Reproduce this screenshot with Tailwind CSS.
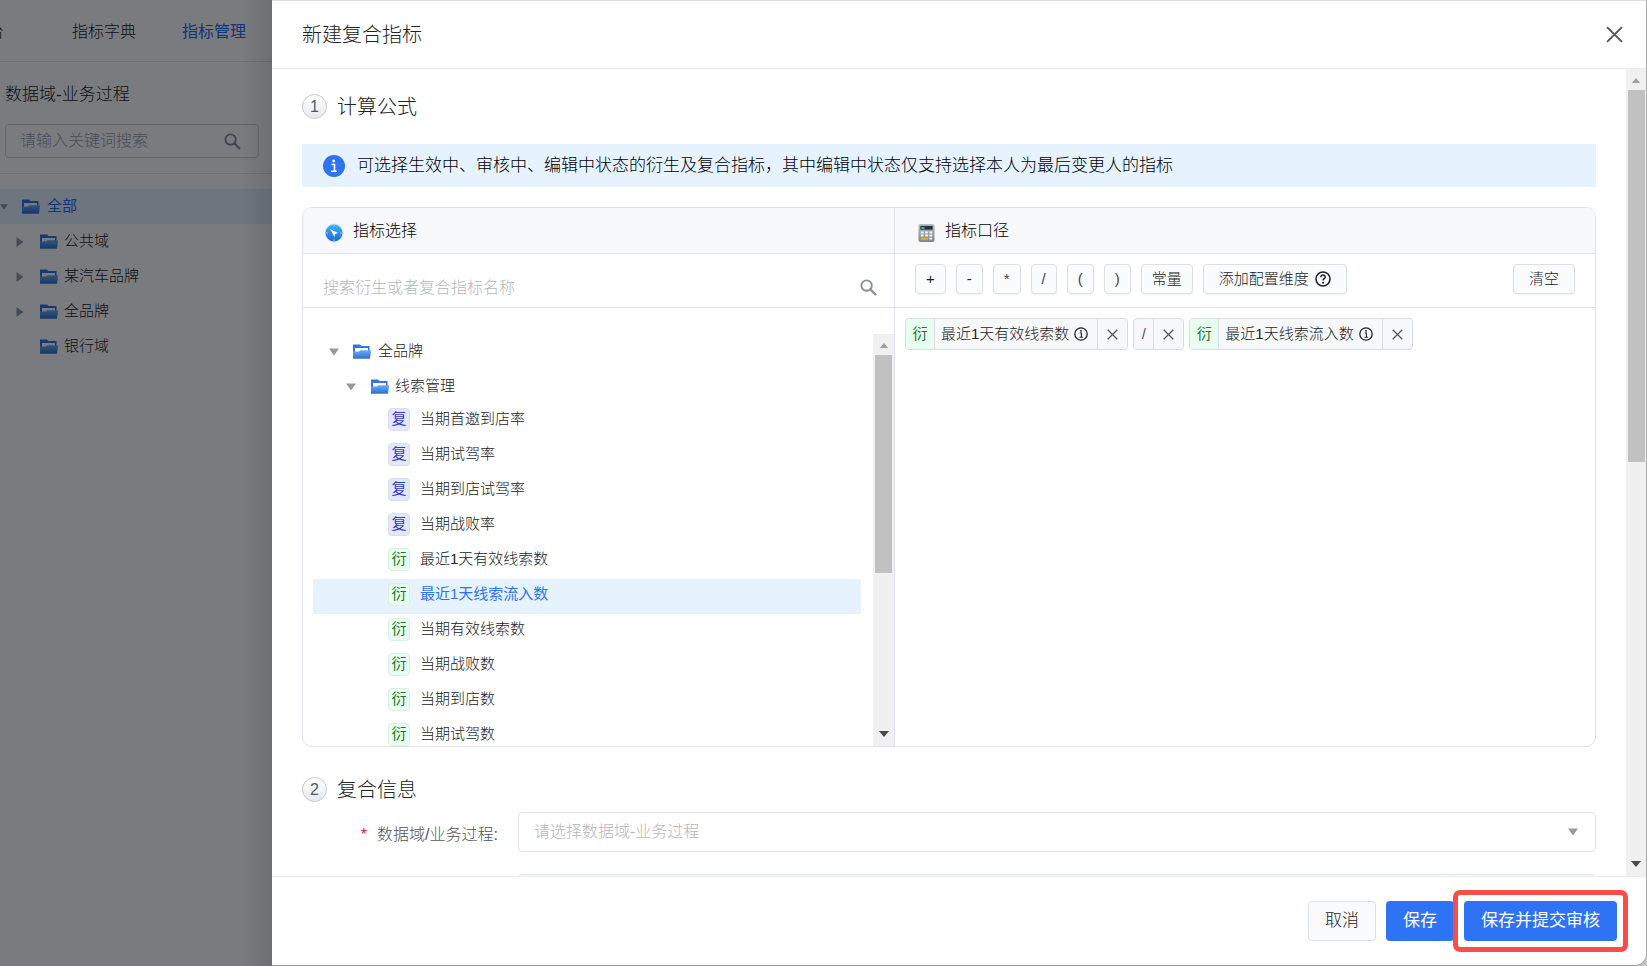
<!DOCTYPE html>
<html lang="zh-CN">
<head>
<meta charset="utf-8">
<title>新建复合指标</title>
<script src="https://cdn.jsdelivr.net/npm/@tailwindcss/browser@4"></script>
</head>
<body class="h-screen overflow-hidden bg-[#c4c6ca] font-['Liberation_Sans','Noto_Sans_CJK_SC',sans-serif] font-light text-[#222]">
<svg class="absolute size-0">
  <defs>
    <linearGradient id="folderFill" x1="0" y1="0" x2="0" y2="1"><stop offset="0" stop-color="#6aabf5"/><stop offset="1" stop-color="#2f72cf"/></linearGradient>
    <linearGradient id="compassFill" x1="0" y1="0" x2="0" y2="1"><stop offset="0" stop-color="#3db4f5"/><stop offset="1" stop-color="#2266d8"/></linearGradient>
    <linearGradient id="calcFill" x1="0" y1="0" x2="0" y2="1"><stop offset="0" stop-color="#b9c0c4"/><stop offset="1" stop-color="#7e868b"/></linearGradient>
  </defs>
  <symbol id="folder" viewBox="0 0 18 15"><path d="M0 .5h7l1.500 1.500H16.500V7H17.500L17 14.500H0z" fill="#3672e6"/><path d="M2 4h13v4H2z" fill="#fff"/><path d="M0 14.500V7.500h6l1.200-1.200H17.800L17 14.500z" fill="url(#folderFill)"/></symbol>
  <symbol id="down" viewBox="0 0 10 8"><path d="M0 .5h10L5 7.500z" fill="#929ba3"/></symbol>
  <symbol id="right" viewBox="0 0 8 10"><path d="M.5 0v10L7.500 5z" fill="#929ba3"/></symbol>
  <symbol id="search" viewBox="0 0 18 18"><circle cx="7" cy="7" r="5.500" fill="none" stroke="#87919a" stroke-width="2"/><path d="M11 11l6 6" stroke="#87919a" stroke-width="2.400"/></symbol>
  <symbol id="close" viewBox="0 0 16 16"><path d="M1 1l14 14M15 1L1 15" fill="none" stroke="currentColor" stroke-width="1.800"/></symbol>
  <symbol id="info" viewBox="0 0 14 14"><circle cx="7" cy="7" r="6.200" fill="none" stroke="#222" stroke-width="1.300"/><path d="M5.700 6h1.700v4M5.500 10.200h3.400" fill="none" stroke="#222" stroke-width="1.100"/><circle cx="7" cy="3.900" r=".9" fill="#222"/></symbol>
  <symbol id="sup" viewBox="0 0 10 6"><path d="M0 6h10L5 0z" fill="#a0a0a0"/></symbol>
  <symbol id="sdown" viewBox="0 0 10 6"><path d="M0 0h10L5 6z" fill="#4a4a4a"/></symbol>
</svg>
<div class="flex h-full">
  <aside class="relative flex w-[272px] shrink-0 flex-col bg-white">
    <nav class="flex h-[62px] shrink-0 items-center justify-end gap-[46px] overflow-hidden border-b border-gray-200 pt-[2px] pr-[26px] text-[16px] whitespace-nowrap">
      <a href="#" class="mr-[22px]">平台</a>
      <a href="#">指标字典</a>
      <a href="#" class="font-normal text-[#2468f2]">指标管理</a>
    </nav>
    <div class="border-b border-gray-200 px-[5px] pt-5 pb-[15px]">
      <h2 class="text-[17px] leading-[26px]">数据域-业务过程</h2>
      <label class="mt-4 mr-2 flex h-[34px] items-center rounded border border-gray-300 pr-[17px] pl-[14px]">
        <input type="text" aria-label="关键词搜索" placeholder="请输入关键词搜索" class="w-0 flex-1 text-[16px] outline-none placeholder:text-gray-400">
        <svg class="size-[17px]"><use href="#search"/></svg>
      </label>
    </div>
    <ul class="pt-[15px] text-[15px]">
      <li class="flex h-[35px] items-center bg-[#e6f3ff] font-normal text-[#2468f2]"><svg class="mr-[14px] h-2 w-2"><use href="#down"/></svg><svg class="mr-[7px] h-[15px] w-[18px]"><use href="#folder"/></svg>全部</li>
      <li class="flex h-[35px] items-center pl-4"><svg class="mr-4 h-[10px] w-2"><use href="#right"/></svg><svg class="mr-[6px] h-[15px] w-[18px]"><use href="#folder"/></svg>公共域</li>
      <li class="flex h-[35px] items-center pl-4"><svg class="mr-4 h-[10px] w-2"><use href="#right"/></svg><svg class="mr-[6px] h-[15px] w-[18px]"><use href="#folder"/></svg>某汽车品牌</li>
      <li class="flex h-[35px] items-center pl-4"><svg class="mr-4 h-[10px] w-2"><use href="#right"/></svg><svg class="mr-[6px] h-[15px] w-[18px]"><use href="#folder"/></svg>全品牌</li>
      <li class="flex h-[35px] items-center pl-10"><svg class="mr-[6px] h-[15px] w-[18px]"><use href="#folder"/></svg>银行域</li>
    </ul>
    <div class="absolute inset-0 bg-[#01060d]/53"></div>
    <div class="absolute inset-y-0 right-0 w-8 bg-linear-to-l from-black/10 to-transparent"></div>
  </aside>

  <main class="flex min-w-0 flex-1 flex-col rounded-br-xl border-t border-r border-b border-t-[#ddd] border-r-[#aaa] border-b-[#999] bg-white">
    <header class="flex h-[68px] shrink-0 items-center justify-between border-b border-[#ececec] pr-[23px] pl-[30px]">
      <h1 class="text-[20px]">新建复合指标</h1>
      <button type="button" aria-label="关闭" class="text-[#555]"><svg class="size-[17px]"><use href="#close"/></svg></button>
    </header>

    <div class="flex min-h-0 flex-1">
      <div class="min-w-0 flex-1 overflow-hidden pr-[30px] pl-[30px]">
        <h2 class="mt-6 flex h-[27px] items-center gap-[10px] text-[20px]"><span class="flex size-[25px] items-center justify-center rounded-full border border-[#c9ccd0] bg-linear-to-b from-white to-[#e6e9ed] text-[16px] font-medium text-[#4a5f6e]">1</span>计算公式</h2>
        <p class="mt-6 flex h-[43px] items-center bg-[#e6f3ff] pl-[21px] text-[17px] text-black">
          <svg class="mr-3 size-[22px] shrink-0" viewBox="0 0 22 22"><circle cx="11" cy="11" r="11" fill="#2e73f3"/><circle cx="10.700" cy="6" r="1.400" fill="#fff"/><path d="M8.500 9.500h3v6.500M8 16.300h6" fill="none" stroke="#fff" stroke-width="1.600"/></svg>
          可选择生效中、审核中、编辑中状态的衍生及复合指标，其中编辑中状态仅支持选择本人为最后变更人的指标
        </p>

        <div class="mt-5 flex h-[540px] overflow-hidden rounded-[10px] border border-[#dfe2e6]">
          <section class="flex w-[592px] shrink-0 flex-col border-r border-[#dfe2e6]">
            <h3 class="flex h-[46px] shrink-0 items-center border-b border-[#dfe2e6] bg-[#f7f8fa] pl-[21px] text-[16px] text-black">
              <svg class="mt-1 mr-[9px] size-5" viewBox="0 0 20 20"><circle cx="10" cy="10" r="9.500" fill="#dfe4ea"/><circle cx="10" cy="10" r="8.500" fill="url(#compassFill)"/><path d="M6 6l8 4-3 1-.5 3z" fill="#fff"/><path d="M10 2v2M10 16v2M2 10h2M16 10h2" stroke="#8fd0fa"/></svg>
              指标选择
            </h3>
            <label class="flex h-[54px] shrink-0 items-center border-b border-[#dfe2e6] pt-[14px] pr-[17px] pl-5">
              <input type="text" aria-label="搜索指标" placeholder="搜索衍生或者复合指标名称" class="min-w-0 flex-1 text-[16px] outline-none placeholder:text-[#b4b7bb]">
              <svg class="size-[17px]"><use href="#search"/></svg>
            </label>
            <div class="flex min-h-0 flex-1 pt-[26px] pl-[10px]">
              <ul class="min-w-0 flex-1 overflow-hidden pr-3 text-[15px]">
                <li class="flex h-[35px] items-center pl-4"><svg class="mr-[14px] h-2 w-[10px]"><use href="#down"/></svg><svg class="mr-[7px] h-[15px] w-[18px]"><use href="#folder"/></svg>全品牌</li>
                <li class="flex h-[35px] items-center pl-[33px]"><svg class="mr-[15px] h-2 w-[10px]"><use href="#down"/></svg><svg class="mr-[6px] h-[15px] w-[18px]"><use href="#folder"/></svg>线索管理</li>
                <li class="flex h-[35px] items-center gap-[10px] pb-1 pl-[75px]"><span class="flex h-[23px] w-[22px] items-center justify-center rounded border border-[#d9dcf3] bg-[#e4e7fb] font-normal text-[#2b3cc4]">复</span>当期首邀到店率</li>
                <li class="flex h-[35px] items-center gap-[10px] pb-1 pl-[75px]"><span class="flex h-[23px] w-[22px] items-center justify-center rounded border border-[#d9dcf3] bg-[#e4e7fb] font-normal text-[#2b3cc4]">复</span>当期试驾率</li>
                <li class="flex h-[35px] items-center gap-[10px] pb-1 pl-[75px]"><span class="flex h-[23px] w-[22px] items-center justify-center rounded border border-[#d9dcf3] bg-[#e4e7fb] font-normal text-[#2b3cc4]">复</span>当期到店试驾率</li>
                <li class="flex h-[35px] items-center gap-[10px] pb-1 pl-[75px]"><span class="flex h-[23px] w-[22px] items-center justify-center rounded border border-[#d9dcf3] bg-[#e4e7fb] font-normal text-[#2b3cc4]">复</span>当期战败率</li>
                <li class="flex h-[35px] items-center gap-[10px] pb-1 pl-[75px]"><span class="flex h-[23px] w-[22px] items-center justify-center rounded border border-[#d8f0e0] bg-[#e9fdf1] font-normal text-[#127a2e]">衍</span>最近1天有效线索数</li>
                <li class="flex h-[35px] items-center gap-[10px] bg-[#e6f3ff] pb-1 pl-[75px] font-normal text-[#2e73f3]"><span class="flex h-[23px] w-[22px] items-center justify-center rounded border border-[#d8f0e0] bg-[#e9fdf1] text-[#127a2e]">衍</span>最近1天线索流入数</li>
                <li class="flex h-[35px] items-center gap-[10px] pb-1 pl-[75px]"><span class="flex h-[23px] w-[22px] items-center justify-center rounded border border-[#d8f0e0] bg-[#e9fdf1] font-normal text-[#127a2e]">衍</span>当期有效线索数</li>
                <li class="flex h-[35px] items-center gap-[10px] pb-1 pl-[75px]"><span class="flex h-[23px] w-[22px] items-center justify-center rounded border border-[#d8f0e0] bg-[#e9fdf1] font-normal text-[#127a2e]">衍</span>当期战败数</li>
                <li class="flex h-[35px] items-center gap-[10px] pb-1 pl-[75px]"><span class="flex h-[23px] w-[22px] items-center justify-center rounded border border-[#d8f0e0] bg-[#e9fdf1] font-normal text-[#127a2e]">衍</span>当期到店数</li>
                <li class="flex h-[35px] items-center gap-[10px] pb-1 pl-[75px]"><span class="flex h-[23px] w-[22px] items-center justify-center rounded border border-[#d8f0e0] bg-[#e9fdf1] font-normal text-[#127a2e]">衍</span>当期试驾数</li>
              </ul>
              <div class="flex w-[21px] flex-col items-center justify-between bg-[#f0f0f0] pb-[9px]">
                <div class="flex flex-col items-center pt-[9px]"><svg class="mb-[7px] h-[5px] w-[10px]"><use href="#sup"/></svg><div class="h-[218px] w-[17px] bg-[#c1c1c1]"></div></div>
                <svg class="h-[6px] w-[10px]"><use href="#sdown"/></svg>
              </div>
            </div>
          </section>

          <section class="flex min-w-0 flex-1 flex-col">
            <h3 class="flex h-[46px] shrink-0 items-center border-b border-[#dfe2e6] bg-[#f7f8fa] pl-[23px] text-[16px] text-black">
              <svg class="mt-1 mr-[10px] h-5 w-[17px]" viewBox="0 0 18 20"><rect x=".5" y=".5" width="17" height="19" rx="2" fill="url(#calcFill)"/><rect x="2.500" y="2.500" width="13" height="4" fill="#2c3338"/><path d="M3.500 4h3.500v1.500H3.500z" fill="#2ee0c0"/><path d="M3 8.500h3v2H3zM7.500 8.500h3v2h-3zM12 8.500h3v2h-3zM3 11.700h3v2H3zM7.500 11.700h3v2h-3zM12 11.700h3v2h-3zM12 15h3v2h-3z" fill="#eef1f3"/><path d="M3 15h7.500v2.200H3z" fill="#f3a81c"/></svg>
              指标口径
            </h3>
            <div class="flex h-[54px] shrink-0 items-center gap-[10px] border-b border-[#dfe2e6] px-5 pb-[3px] text-[15px]">
              <button type="button" class="h-[30px] rounded-[4px] border border-[#dcdfe3] bg-[#fafbfd] px-[10px] shadow-xs">+</button>
              <button type="button" class="h-[30px] rounded-[4px] border border-[#dcdfe3] bg-[#fafbfd] px-[10px] shadow-xs">-</button>
              <button type="button" class="h-[30px] rounded-[4px] border border-[#dcdfe3] bg-[#fafbfd] px-[10px] text-[#444] shadow-xs">*</button>
              <button type="button" class="h-[30px] rounded-[4px] border border-[#dcdfe3] bg-[#fafbfd] px-[10px] text-[#444] shadow-xs">/</button>
              <button type="button" class="h-[30px] rounded-[4px] border border-[#dcdfe3] bg-[#fafbfd] px-[10px] text-[#444] shadow-xs">(</button>
              <button type="button" class="h-[30px] rounded-[4px] border border-[#dcdfe3] bg-[#fafbfd] px-[10px] text-[#444] shadow-xs">)</button>
              <button type="button" class="h-[30px] rounded-[4px] border border-[#dcdfe3] bg-[#fafbfd] px-[10px] shadow-xs">常量</button>
              <button type="button" class="flex h-[30px] items-center gap-[6px] rounded-[4px] border border-[#dcdfe3] bg-[#fafbfd] px-[15px] shadow-xs">添加配置维度
                <svg class="size-4" viewBox="0 0 16 16"><circle cx="8" cy="8" r="7" fill="none" stroke="#222" stroke-width="1.600"/><path d="M5.800 6.200c0-3 4.600-2.700 4.400 0C10.100 7.700 8 7.700 8 9.500" fill="none" stroke="#222" stroke-width="1.500"/><circle cx="8" cy="11.700" r="1" fill="#222"/></svg></button>
              <button type="button" class="ml-auto h-[30px] rounded-[4px] border border-[#dcdfe3] bg-[#fafbfd] px-[15px] shadow-xs">清空</button>
            </div>
            <div class="flex gap-[5px] p-[10px] text-[15px]">
              <div class="flex h-8 items-stretch overflow-hidden rounded-[4px] border border-[#d9dce0] bg-[#f7f8fa]">
                <span class="flex w-7 items-center justify-center bg-[#e9fdf1] font-normal text-[#127a2e]">衍</span>
                <span class="flex items-center gap-[5px] border-x border-[#d9dce0] pr-[9px] pl-[6px]">最近1天有效线索数<svg class="size-[14px]"><use href="#info"/></svg></span>
                <button type="button" aria-label="移除" class="flex w-[29px] items-center justify-center text-[#555]"><svg class="size-[11px]"><use href="#close"/></svg></button>
              </div>
              <div class="flex h-8 items-stretch overflow-hidden rounded-[4px] border border-[#d9dce0] bg-[#f7f8fa]">
                <span class="flex w-5 items-center justify-center border-r border-[#d9dce0] text-[#555]">/</span>
                <button type="button" aria-label="移除" class="flex w-[29px] items-center justify-center text-[#555]"><svg class="size-[11px]"><use href="#close"/></svg></button>
              </div>
              <div class="flex h-8 items-stretch overflow-hidden rounded-[4px] border border-[#d9dce0] bg-[#f7f8fa]">
                <span class="flex w-7 items-center justify-center bg-[#e9fdf1] font-normal text-[#127a2e]">衍</span>
                <span class="flex items-center gap-[5px] border-x border-[#d9dce0] pr-[9px] pl-[6px]">最近1天线索流入数<svg class="size-[14px]"><use href="#info"/></svg></span>
                <button type="button" aria-label="移除" class="flex w-[29px] items-center justify-center text-[#555]"><svg class="size-[11px]"><use href="#close"/></svg></button>
              </div>
            </div>
          </section>
        </div>

        <h2 class="mt-[29px] flex h-[27px] items-center gap-[10px] text-[20px]"><span class="flex size-[25px] items-center justify-center rounded-full border border-[#c9ccd0] bg-linear-to-b from-white to-[#e6e9ed] text-[16px] font-medium text-[#4a5f6e]">2</span>复合信息</h2>
        <div class="mt-[9px] flex items-center text-[16px]">
          <label for="domain" class="w-[216px] shrink-0 pt-[5px] pr-5 text-right text-[#555]"><span class="mr-[10px] text-[#e02020]">*</span>数据域/业务过程:</label>
          <div class="relative min-w-0 flex-1">
            <select id="domain" class="block h-10 w-full appearance-none rounded-[4px] border border-[#dfe2e6] bg-white pl-[15px] text-[#b4b7bb]"><option>请选择数据域-业务过程</option></select>
            <svg class="pointer-events-none absolute top-4 right-[18px] h-2 w-[10px]"><use href="#down"/></svg>
          </div>
        </div>
        <div class="mt-[22px] flex pl-[216px]"><input type="text" aria-label="指标编码" disabled class="h-10 flex-1 rounded-[4px] border border-[#dfe2e6] bg-[#f7f8fa]"></div>
      </div>
      <div class="flex w-5 shrink-0 flex-col items-center justify-between bg-[#f0f0f0] pb-[9px]">
        <div class="flex flex-col items-center pt-[9px]"><svg class="mb-[7px] h-[5px] w-[10px]"><use href="#sup"/></svg><div class="h-[372px] w-[17px] bg-[#c1c1c1]"></div></div>
        <svg class="h-[6px] w-[10px]"><use href="#sdown"/></svg>
      </div>
    </div>

    <footer class="flex h-[89px] shrink-0 items-center justify-end gap-[10px] border-t border-[#ececec] pr-[29px] text-[17px]">
      <button type="button" class="h-10 rounded-[4px] border border-[#dcdfe3] bg-[#fafbfd] px-4">取消</button>
      <button type="button" class="h-10 rounded-[4px] bg-[#2e73f3] px-[17px] font-normal text-white">保存</button>
      <div class="relative">
        <button type="button" class="h-10 rounded-[4px] bg-[#2e73f3] px-[17px] font-normal text-white">保存并提交审核</button>
        <div class="pointer-events-none absolute -inset-[11px] rounded-[7px] border-[5px] border-[#f94d4a]"></div>
      </div>
    </footer>
  </main>
</div>
</body>
</html>
